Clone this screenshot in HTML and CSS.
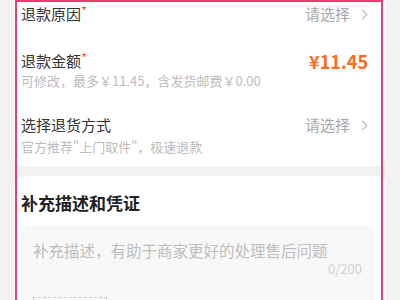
FILE: index.html
```html
<!DOCTYPE html>
<html lang="zh-CN">
<head>
  <meta charset="UTF-8">
  <meta name="viewport" content="width=device-width, initial-scale=1.0">
  <title>申请退款</title>
  <link rel="stylesheet" href="styles.css">
</head>
<body>
  <div class="card card-form">
    <div class="row">
      <div class="row-main">
        <span class="label">退款原因<i class="req">*</i></span>
        <span class="pick">请选择<span class="chev"></span></span>
      </div>
    </div>

    <div class="row row-amount">
      <div class="row-main">
        <span class="label">退款金额<i class="req">*</i></span>
        <span class="price">¥11.45</span>
      </div>
      <div class="sub">可修改，最多￥11.45，含发货邮费￥0.00</div>
    </div>

    <div class="row row-return">
      <div class="row-main">
        <span class="label">选择退货方式</span>
        <span class="pick">请选择<span class="chev"></span></span>
      </div>
      <div class="sub">官方推荐"上门取件"，极速退款</div>
    </div>
  </div>

  <div class="card card-desc">
    <h2 class="title">补充描述和凭证</h2>
    <div class="textbox">
      <div class="placeholder">补充描述，有助于商家更好的处理售后问题</div>
      <div class="counter">0/200</div>
      <div class="upload"></div>
    </div>
  </div>

  <!-- selection outline on top of the form -->
  <div class="outline"></div>
</body>
</html>
```

FILE: styles.css
```css
body {
  margin: 0;
  background-color: #f2f2f2;
  font-family: "Noto Sans CJK SC", "Noto Sans", sans-serif;
  color: #333333;
  overflow: hidden;
}
.card {
  background: #ffffff;
  margin: 0 14px;
  border-radius: 10px;
}
.card-form {
  margin-top: -12px;
  padding: 15px 18px 11px 7px;
}
.row + .row {
  margin-top: 25px;
}
.row-main {
  display: flex;
  justify-content: space-between;
  align-items: center;
  height: 22px;
}
.label {
  font-size: 15px;
  line-height: 22px;
}
.req {
  font-style: normal;
  color: #ff5b32;
  font-size: 13px;
  vertical-align: top;
  line-height: 16px;
}
.pick {
  display: flex;
  align-items: center;
  font-size: 15px;
  color: #a6a6a6;
  line-height: 22px;
}
.chev {
  width: 6px;
  height: 6px;
  border-top: 1px solid #b0b0b0;
  border-right: 1px solid #b0b0b0;
  transform: rotate(45deg);
  margin-left: 9px;
  margin-right: 2px;
}
.price {
  font-size: 18px;
  font-weight: bold;
  color: #ff6a1f;
  line-height: 22px;
}
.sub {
  font-size: 13px;
  line-height: 16px;
  color: #bcbcbc;
  margin-top: 3px;
}
.row-amount .sub {
  margin-top: 1px;
}
.card-desc {
  margin-top: 10px;
  padding: 15px 11px 20px 7px;
}
.title {
  margin: 0;
  font-size: 17px;
  line-height: 24px;
  font-weight: bold;
  color: #222222;
}
.textbox {
  margin-top: 10px;
  background: #f8f8f8;
  border-radius: 10px;
  padding: 14px 13px 20px 12px;
}
.placeholder {
  font-size: 15.5px;
  line-height: 22px;
  color: #bdbdbd;
}
.counter {
  text-align: right;
  font-size: 13px;
  line-height: 16px;
  color: #d0d0d0;
}
.upload {
  margin-top: 20px;
  width: 74px;
  height: 74px;
  border: 1px dashed #cccccc;
  box-sizing: border-box;
}
.outline {
  position: absolute;
  left: 15px;
  top: 0;
  width: 368px;
  height: 320px;
  border: 2px solid #ef3a6e;
  box-sizing: border-box;
}
```
